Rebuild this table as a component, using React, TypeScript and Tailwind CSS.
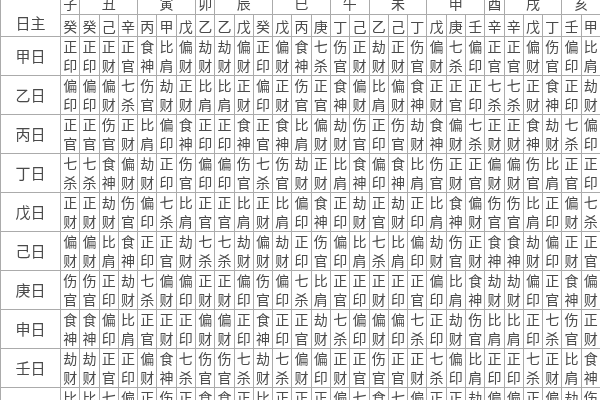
import React from "react";

const STEMS = ["甲", "乙", "丙", "丁", "戊", "己", "庚", "辛", "壬", "癸"];

const GODS = [
  ["比肩", "劫财"],
  ["食神", "伤官"],
  ["偏财", "正财"],
  ["七杀", "正官"],
  ["偏印", "正印"],
];

// relation of a hidden stem to the day stem
const tenGod = (day: string, target: string) => {
  const d = STEMS.indexOf(day);
  const t = STEMS.indexOf(target);
  const rel = (Math.floor(t / 2) - Math.floor(d / 2) + 5) % 5;
  return GODS[rel][d % 2 === t % 2 ? 0 : 1];
};

const BRANCHES: { name: string; span: string }[] = [
  { name: "子", span: "" },
  { name: "丑", span: "col-span-3" },
  { name: "寅", span: "col-span-3" },
  { name: "卯", span: "" },
  { name: "辰", span: "col-span-3" },
  { name: "巳", span: "col-span-3" },
  { name: "午", span: "col-span-2" },
  { name: "未", span: "col-span-3" },
  { name: "申", span: "col-span-3" },
  { name: "酉", span: "" },
  { name: "戌", span: "col-span-3" },
  { name: "亥", span: "col-span-2" },
];

const HIDDEN = [
  "癸", "癸", "己", "辛", "丙", "甲", "戊", "乙", "乙", "戊", "癸", "戊", "丙", "庚",
  "丁", "己", "乙", "己", "丁", "戊", "庚", "壬", "辛", "辛", "戊", "丁", "壬", "甲",
];

const ROWS = [
  { label: "甲日", stem: "甲" },
  { label: "乙日", stem: "乙" },
  { label: "丙日", stem: "丙" },
  { label: "丁日", stem: "丁" },
  { label: "戊日", stem: "戊" },
  { label: "己日", stem: "己" },
  { label: "庚日", stem: "庚" },
  { label: "申日", stem: "辛" },
  { label: "壬日", stem: "壬" },
  { label: "癸日", stem: "癸" },
];

export default function App() {
  return (
    <div
      lang="zh-CN"
      className="h-[400px] w-[600px] overflow-hidden bg-white text-[#4a4a4a] antialiased will-change-transform"
      style={{ fontFamily: '"Noto Sans CJK SC", sans-serif' }}
    >
      <div className="-mt-[8px] grid grid-cols-[59px_repeat(28,minmax(0,1fr))] grid-rows-[22px_21px_repeat(10,38px)] gap-px bg-[#ababab] pl-px">
        <div className="row-span-2 flex items-end justify-center bg-white pb-[4px] text-[15px] leading-[18px]">
          日主
        </div>
        {BRANCHES.map((b, i) => (
          <div key={i} className={`${b.span} flex items-center justify-center bg-white text-[14px] leading-none`}>
            {b.name}
          </div>
        ))}
        {HIDDEN.map((s, i) => (
          <div key={i} className="flex items-center justify-center bg-white text-[14px] leading-none">
            {s}
          </div>
        ))}
        {ROWS.map((row) => (
          <React.Fragment key={row.label}>
            <div className="flex items-center justify-center bg-white text-[15px]">{row.label}</div>
            {HIDDEN.map((s, i) => {
              const god = tenGod(row.stem, s);
              return (
                <div key={i} className="flex flex-col items-center justify-center bg-white text-[14px] leading-[19px]">
                  <span>{god[0]}</span>
                  <span>{god[1]}</span>
                </div>
              );
            })}
          </React.Fragment>
        ))}
      </div>
    </div>
  );
}
